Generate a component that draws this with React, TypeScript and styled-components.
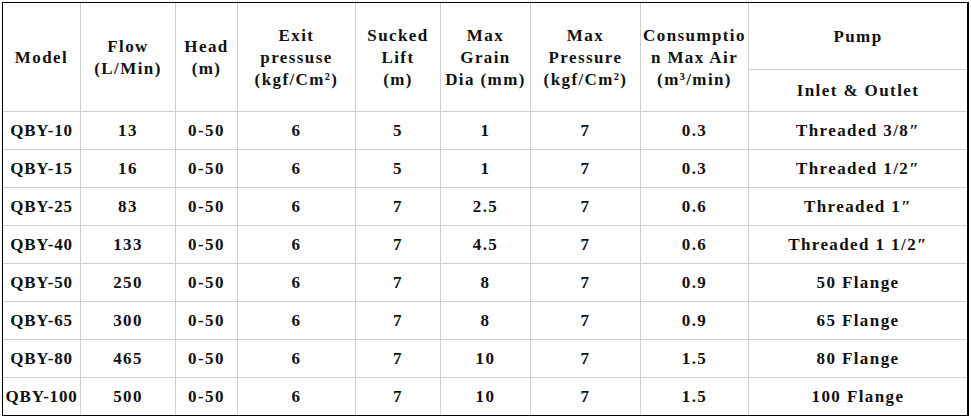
import React from "react";
import styled, { createGlobalStyle } from "styled-components";

const Global = createGlobalStyle`
  html, body { margin: 0; padding: 0; background: #fff; }
  body { font-family: "Liberation Serif", "DejaVu Serif", serif; }
`;

const Page = styled.div`
  padding: 2px 0 0 2px;
`;

const Grid = styled.div`
  display: grid;
  grid-template-columns: 77px 94px 61px 117px 84px 89px 109px 107px 218px;
  grid-template-rows: 66px 41px repeat(8, 37px);
  gap: 1px;
  width: max-content;
  background: #cfcfcf;
  border-top: 1px solid #000;
  border-left: 1px solid #000;
  border-bottom: 1px solid #000;
  border-right: 2px solid #000;
`;

const Cell = styled.div<{ $span?: boolean; $tight?: boolean }>`
  background: #fff;
  display: flex;
  align-items: center;
  justify-content: center;
  text-align: center;
  font-family: "Liberation Serif", "DejaVu Serif", serif;
  font-weight: 700;
  font-size: 17px;
  letter-spacing: ${(p) => (p.$tight ? "0.8px" : "1.4px")};
  line-height: 22px;
  color: #111;
  white-space: nowrap;
  padding-top: 1px;
  ${(p) => (p.$span ? "grid-row: 1 / span 2;" : "")}
`;

const headers: string[][] = [
  ["Model"],
  ["Flow", "(L/Min)"],
  ["Head", "(m)"],
  ["Exit", "pressuse", "(kgf/Cm²)"],
  ["Sucked", "Lift", "(m)"],
  ["Max", "Grain", "Dia (mm)"],
  ["Max", "Pressure", "(kgf/Cm²)"],
  ["Consumptio", "n Max Air", "(m³/min)"],
];

const rows: string[][] = [
  ["QBY-10", "13", "0-50", "6", "5", "1", "7", "0.3", "Threaded 3/8″"],
  ["QBY-15", "16", "0-50", "6", "5", "1", "7", "0.3", "Threaded 1/2″"],
  ["QBY-25", "83", "0-50", "6", "7", "2.5", "7", "0.6", "Threaded 1″"],
  ["QBY-40", "133", "0-50", "6", "7", "4.5", "7", "0.6", "Threaded 1 1/2″"],
  ["QBY-50", "250", "0-50", "6", "7", "8", "7", "0.9", "50 Flange"],
  ["QBY-65", "300", "0-50", "6", "7", "8", "7", "0.9", "65 Flange"],
  ["QBY-80", "465", "0-50", "6", "7", "10", "7", "1.5", "80 Flange"],
  ["QBY-100", "500", "0-50", "6", "7", "10", "7", "1.5", "100 Flange"],
];

export default function App() {
  return (
    <>
      <Global />
      <Page>
        <Grid>
          {headers.map((lines, i) => (
            <Cell key={`h${i}`} $span>
              <span>
                {lines.map((l, j) => (
                  <React.Fragment key={j}>
                    {j > 0 && <br />}
                    {l}
                  </React.Fragment>
                ))}
              </span>
            </Cell>
          ))}
          <Cell>Pump</Cell>
          <Cell>Inlet &amp; Outlet</Cell>
          {rows.map((r, i) =>
            r.map((v, j) => (
              <Cell key={`r${i}-${j}`} $tight={j === 0}>
                {v}
              </Cell>
            ))
          )}
        </Grid>
      </Page>
    </>
  );
}
